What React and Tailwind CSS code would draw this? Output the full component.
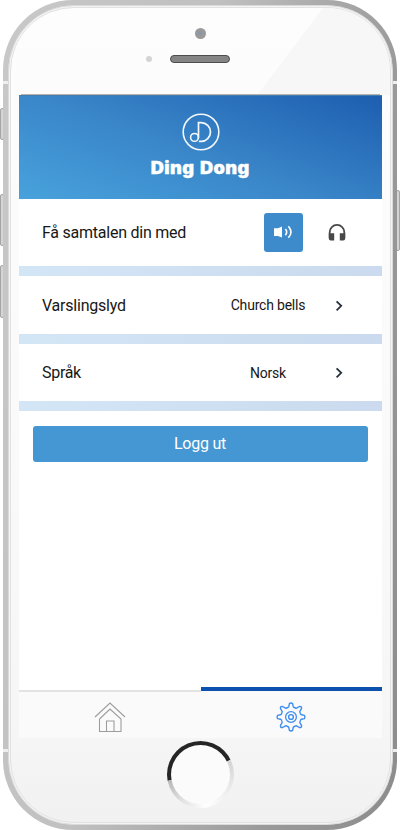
import React from "react";

function LogoMark() {
  return (
    <svg viewBox="0 0 40 40" className="ml-px h-10 w-10" fill="none" stroke="#f3f8fd" strokeLinecap="round">
      <circle cx="20" cy="20" r="17.8" strokeWidth="1.6" />
      <circle cx="13.5" cy="25.4" r="3.9" strokeWidth="1.6" />
      <path d="M17.5 25.4V10.6H20.1A9.4 9.4 0 0 1 20.1 29.4H18.6" strokeWidth="1.7" />
    </svg>
  );
}

function SpeakerIcon() {
  return (
    <svg viewBox="0 0 20 14" className="h-3.5 w-5" fill="none" stroke="#fff" strokeWidth="1.6">
      <path d="M1 3.2H5L9 1.4V12.6L5 11H1Z" fill="#fff" stroke="none" />
      <path d="M12.4 3.9Q15 7 12.4 10.2M15.4 1.2Q20.6 7 15.4 12.8" />
    </svg>
  );
}

function HeadphonesIcon() {
  return (
    <svg viewBox="0 0 18 18" className="h-[18px] w-[18px]">
      <path d="M1.7 15V9.2a7.3 7.3 0 0 1 14.6 0V15" fill="none" stroke="#484848" strokeWidth="1.8" />
      <path d="M.8 10.2H6.2V17.4H2.7Q.8 17.4 .8 15.5ZM17.2 10.2H11.8V17.4H15.3Q17.2 17.4 17.2 15.5Z" fill="#484848" />
    </svg>
  );
}

function Chevron() {
  return (
    <svg viewBox="0 0 8 12" className="h-3 w-2" fill="none" stroke="#26303f" strokeWidth="1.8">
      <path d="M1.6 1.3L6.2 5.8L1.6 10.3" />
    </svg>
  );
}

function HomeIcon() {
  return (
    <svg viewBox="0 0 32 32" className="h-8 w-8" fill="none" stroke="#9d9d9d" strokeWidth="1.1">
      <path d="M1 16L16 2L31 16M5.5 18V30.5H27V18L16 8L5.5 18M12.5 30V20H20V30" />
    </svg>
  );
}

function GearIcon() {
  return (
    <svg viewBox="0 0 32 32" className="h-8 w-8" fill="none" stroke="#3f8df0" strokeWidth="1.4" strokeLinejoin="round">
      <path d="M14.4 2.6Q16 1.4 17.6 2.6L18.2 5.4Q18.5 6.2 19.3 6.5L20.5 7Q21.3 7.4 22 6.9L24.4 5.5Q26.9 5.1 26.5 7.6L25.1 10Q24.6 10.7 25 11.5L25.5 12.7Q25.8 13.5 26.6 13.8L29.4 14.4Q30.6 16 29.4 17.6L26.6 18.2Q25.8 18.5 25.5 19.3L25 20.5Q24.6 21.3 25.1 22L26.5 24.4Q26.9 26.9 24.4 26.5L22 25.1Q21.3 24.6 20.5 25L19.3 25.5Q18.5 25.8 18.2 26.6L17.6 29.4Q16 30.6 14.4 29.4L13.8 26.6Q13.5 25.8 12.7 25.5L11.5 25Q10.7 24.6 10 25.1L7.6 26.5Q5.1 26.9 5.5 24.4L6.9 22Q7.4 21.3 7 20.5L6.5 19.3Q6.2 18.5 5.4 18.2L2.6 17.6Q1.4 16 2.6 14.4L5.4 13.8Q6.2 13.5 6.5 12.7L7 11.5Q7.4 10.7 6.9 10L5.5 7.6Q5.1 5.1 7.6 5.5L10 6.9Q10.7 7.4 11.5 7L12.7 6.5Q13.5 6.2 13.8 5.4Z" />
      <circle cx="16" cy="16" r="5.4" strokeWidth="1.3" />
      <circle cx="16" cy="16" r="2.4" strokeWidth="1.4" />
    </svg>
  );
}

function Band() {
  return <div className="h-2.5 shrink-0 bg-linear-to-r from-[#d3e6f6] to-[#cbdaee]" />;
}

function SettingRow({ label, value, height, labelStyle }) {
  return (
    <div className={"flex shrink-0 items-center pt-0.5 pr-[39px] pl-[23.5px] " + height}>
      <span className={"w-[183px] text-[16px] " + labelStyle}>{label}</span>
      <span className="w-[86px] text-center text-[14px] tracking-[-0.2px]">{value}</span>
      <span className="ml-auto"><Chevron /></span>
    </div>
  );
}

function Screen() {
  return (
    <div className="ml-2 flex h-[643px] w-[363px] shrink-0 flex-col bg-white text-[#171717]">
      <header className="flex h-[104px] shrink-0 flex-col items-center border-t border-[#417db4] bg-[linear-gradient(20deg,#48a2dc_0%,#3985c8_48%,#1d5eb0_100%)] pt-4">
        <LogoMark />
        <h1 className="mt-1 origin-center scale-x-[1.07] font-[Inter] text-[17px] leading-6 font-black tracking-[0.35px] text-white [-webkit-text-stroke:0.35px_white] [word-spacing:1.5px]">Ding Dong</h1>
      </header>
      <div className="flex h-[67px] shrink-0 items-center pl-[23.5px]">
        <span className="w-[221.5px] pt-0.5 text-[16px] tracking-[-0.24px]">Få samtalen din med</span>
        <button className="flex h-[39px] w-[39px] items-center justify-center rounded-[3px] bg-[#3e8bcb]"><SpeakerIcon /></button>
        <span className="ml-[25.5px]"><HeadphonesIcon /></span>
      </div>
      <Band />
      <SettingRow label="Varslingslyd" value="Church bells" height="h-[58px]" labelStyle="tracking-[-0.22px]" />
      <Band />
      <SettingRow label="Språk" value="Norsk" height="h-[57px]" labelStyle="tracking-[-0.3px]" />
      <Band />
      <button className="mx-3.5 mt-[15px] h-9 shrink-0 rounded-[3px] bg-[#4497d2] pt-px text-[16px] tracking-[-0.25px] text-white">Logg ut</button>
      <nav className="mt-auto flex h-[51px]">
        <div className="flex w-[182px] flex-col pt-[3px]">
          <div className="flex flex-1 items-center justify-center border-t-2 border-[#e3e3e3] bg-[#fafafa] pt-1"><HomeIcon /></div>
        </div>
        <div className="flex w-[181px] items-center justify-center border-t-4 border-[#0c51ae] bg-[#fafafa] pt-[5px]"><GearIcon /></div>
      </nav>
    </div>
  );
}

function SideButton({ place }) {
  return <i className={"absolute w-1 rounded-sm border border-[#a5a5a5] bg-[#d5d5d5] " + place} />;
}

export default function App() {
  return (
    <main className="relative h-[830px] w-[400px] overflow-hidden bg-white font-[Roboto,sans-serif]">
      <SideButton place="top-[108px] left-0 h-8" />
      <SideButton place="top-[194px] left-0 h-[52px]" />
      <SideButton place="top-[265px] left-0 h-[53px]" />
      <SideButton place="top-[190px] right-0 h-[61px]" />
      <div className="relative ml-[3px] h-[829.5px] w-[394px] rounded-[70px] bg-[linear-gradient(100deg,#c8c8c8_0%,#c0c0c0_40%,#9a9a9a_75%,#8c8c8c_100%)] p-[4.5px]">
        <i className="absolute top-[81px] left-0 h-[3px] w-full bg-[#eee]" />
        <i className="absolute top-[749px] left-0 h-[3px] w-full bg-[#eee]" />
        <div className="relative h-full rounded-[66px] border-[1.5px] border-[#dadada] bg-[#f4f4f4] p-[1px]">
          <div className="flex h-full flex-col overflow-hidden rounded-[64px] border border-[#e2e2e2] bg-[linear-gradient(180deg,#fdfdfd_0%,#fafafa_50%,#f6f6f6_88%,#f1f1f1_100%)]">
            <div className="flex h-[87px] shrink-0 flex-col bg-[linear-gradient(127deg,transparent_70%,#f7f7f7_70.3%)]">
              <div className="mt-5 ml-[184px] flex h-[11px] w-[11px] items-center justify-center rounded-full bg-[#999]">
                <i className="h-1 w-1 rounded-full bg-[#8599ad]" />
              </div>
              <div className="mt-4 ml-[135px] flex items-center">
                <i className="h-1.5 w-1.5 rounded-full bg-[#d4d4d4]" />
                <i className="ml-[18px] h-2 w-[60px] rounded-full border-[1.5px] border-[#4d4d4d] bg-[#858585]" />
              </div>
              <i className="mt-auto mr-2.5 ml-2.5 h-px bg-[#b6b3ab]" />
            </div>
            <Screen />
            <div className="flex justify-center pt-[3px]">
              <div className="h-[67px] w-[67px] rounded-full bg-[conic-gradient(#252525_0deg,#252525_63deg,#d3d3d3_64deg,#e9e9e9_110deg,#fff_170deg,#e2e2e2_215deg,#b8b8b8_259deg,#252525_260deg,#252525_360deg)] p-1">
                <div className="h-full w-full rounded-full bg-[#fbfbfb]" />
              </div>
            </div>
          </div>
        </div>
      </div>
    </main>
  );
}
